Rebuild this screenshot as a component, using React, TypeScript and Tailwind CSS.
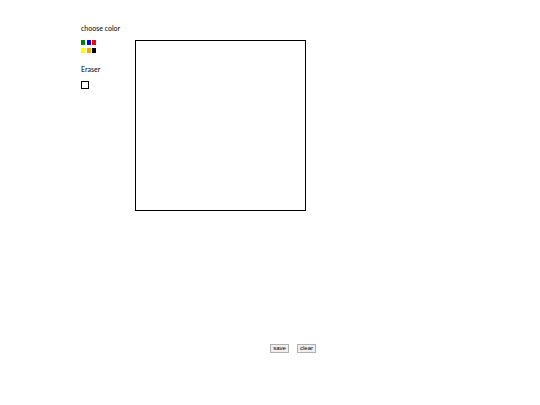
import { useRef, useState } from "react";
import type { PointerEvent } from "react";

interface Swatch {
  name: string;
  className: string;
}

const SWATCHES: Swatch[] = [
  { name: "green", className: "bg-[green]" },
  { name: "blue", className: "bg-[blue]" },
  { name: "red", className: "bg-[red]" },
  { name: "yellow", className: "bg-[yellow]" },
  { name: "orange", className: "bg-[orange]" },
  { name: "black", className: "bg-black" },
];

const BUTTON_CLASS =
  "h-[9px] w-[19px] border border-[#b0b0b0] bg-[#efefef] font-['Liberation_Sans',sans-serif] text-[6px] leading-[7px] text-black";

export default function App() {
  const canvasRef = useRef<HTMLCanvasElement>(null);
  const drawing = useRef(false);
  const [color, setColor] = useState("black");

  const startStroke = (e: PointerEvent<HTMLCanvasElement>) => {
    const ctx = canvasRef.current?.getContext("2d");
    if (!ctx) return;
    drawing.current = true;
    ctx.beginPath();
    ctx.moveTo(e.nativeEvent.offsetX, e.nativeEvent.offsetY);
  };

  const moveStroke = (e: PointerEvent<HTMLCanvasElement>) => {
    const ctx = canvasRef.current?.getContext("2d");
    if (!ctx || !drawing.current) return;
    ctx.strokeStyle = color;
    ctx.lineWidth = color === "white" ? 14 : 2;
    ctx.lineTo(e.nativeEvent.offsetX, e.nativeEvent.offsetY);
    ctx.stroke();
  };

  const stopStroke = () => {
    drawing.current = false;
  };

  const clear = () => {
    const canvas = canvasRef.current;
    canvas?.getContext("2d")?.clearRect(0, 0, canvas.width, canvas.height);
  };

  const save = () => {
    const canvas = canvasRef.current;
    if (!canvas) return;
    const link = document.createElement("a");
    link.href = canvas.toDataURL();
    link.download = "drawing.png";
    link.click();
  };

  return (
    <main className="min-h-screen bg-white font-['Lato',sans-serif] text-[7px] leading-2 text-black">
      <div className="flex items-start pl-[15%]">
        {/* Tools */}
        <div className="w-[54px] shrink-0 whitespace-nowrap pt-6">
          <h2>choose color</h2>
          <div className="mt-2 grid w-[15px] grid-cols-[repeat(3,4px)] justify-between gap-y-[3px]">
            {SWATCHES.map((s) => (
              <button
                key={s.name}
                type="button"
                aria-label={s.name}
                onClick={() => setColor(s.name)}
                className={`h-[5px] w-1 ${s.className}`}
              />
            ))}
          </div>
          <h2 className="mt-3">Eraser</h2>
          <button
            type="button"
            aria-label="Eraser"
            onClick={() => setColor("white")}
            className="mt-2 block size-2 border border-black bg-white"
          />
        </div>

        <canvas
          ref={canvasRef}
          width={169}
          height={169}
          onPointerDown={startStroke}
          onPointerMove={moveStroke}
          onPointerUp={stopStroke}
          onPointerLeave={stopStroke}
          className="mt-10 border border-black"
        />
      </div>

      <div className="ml-[50%] mt-[133px] flex gap-2">
        <button type="button" onClick={save} className={BUTTON_CLASS}>
          save
        </button>
        <button type="button" onClick={clear} className={BUTTON_CLASS}>
          clear
        </button>
      </div>
    </main>
  );
}
